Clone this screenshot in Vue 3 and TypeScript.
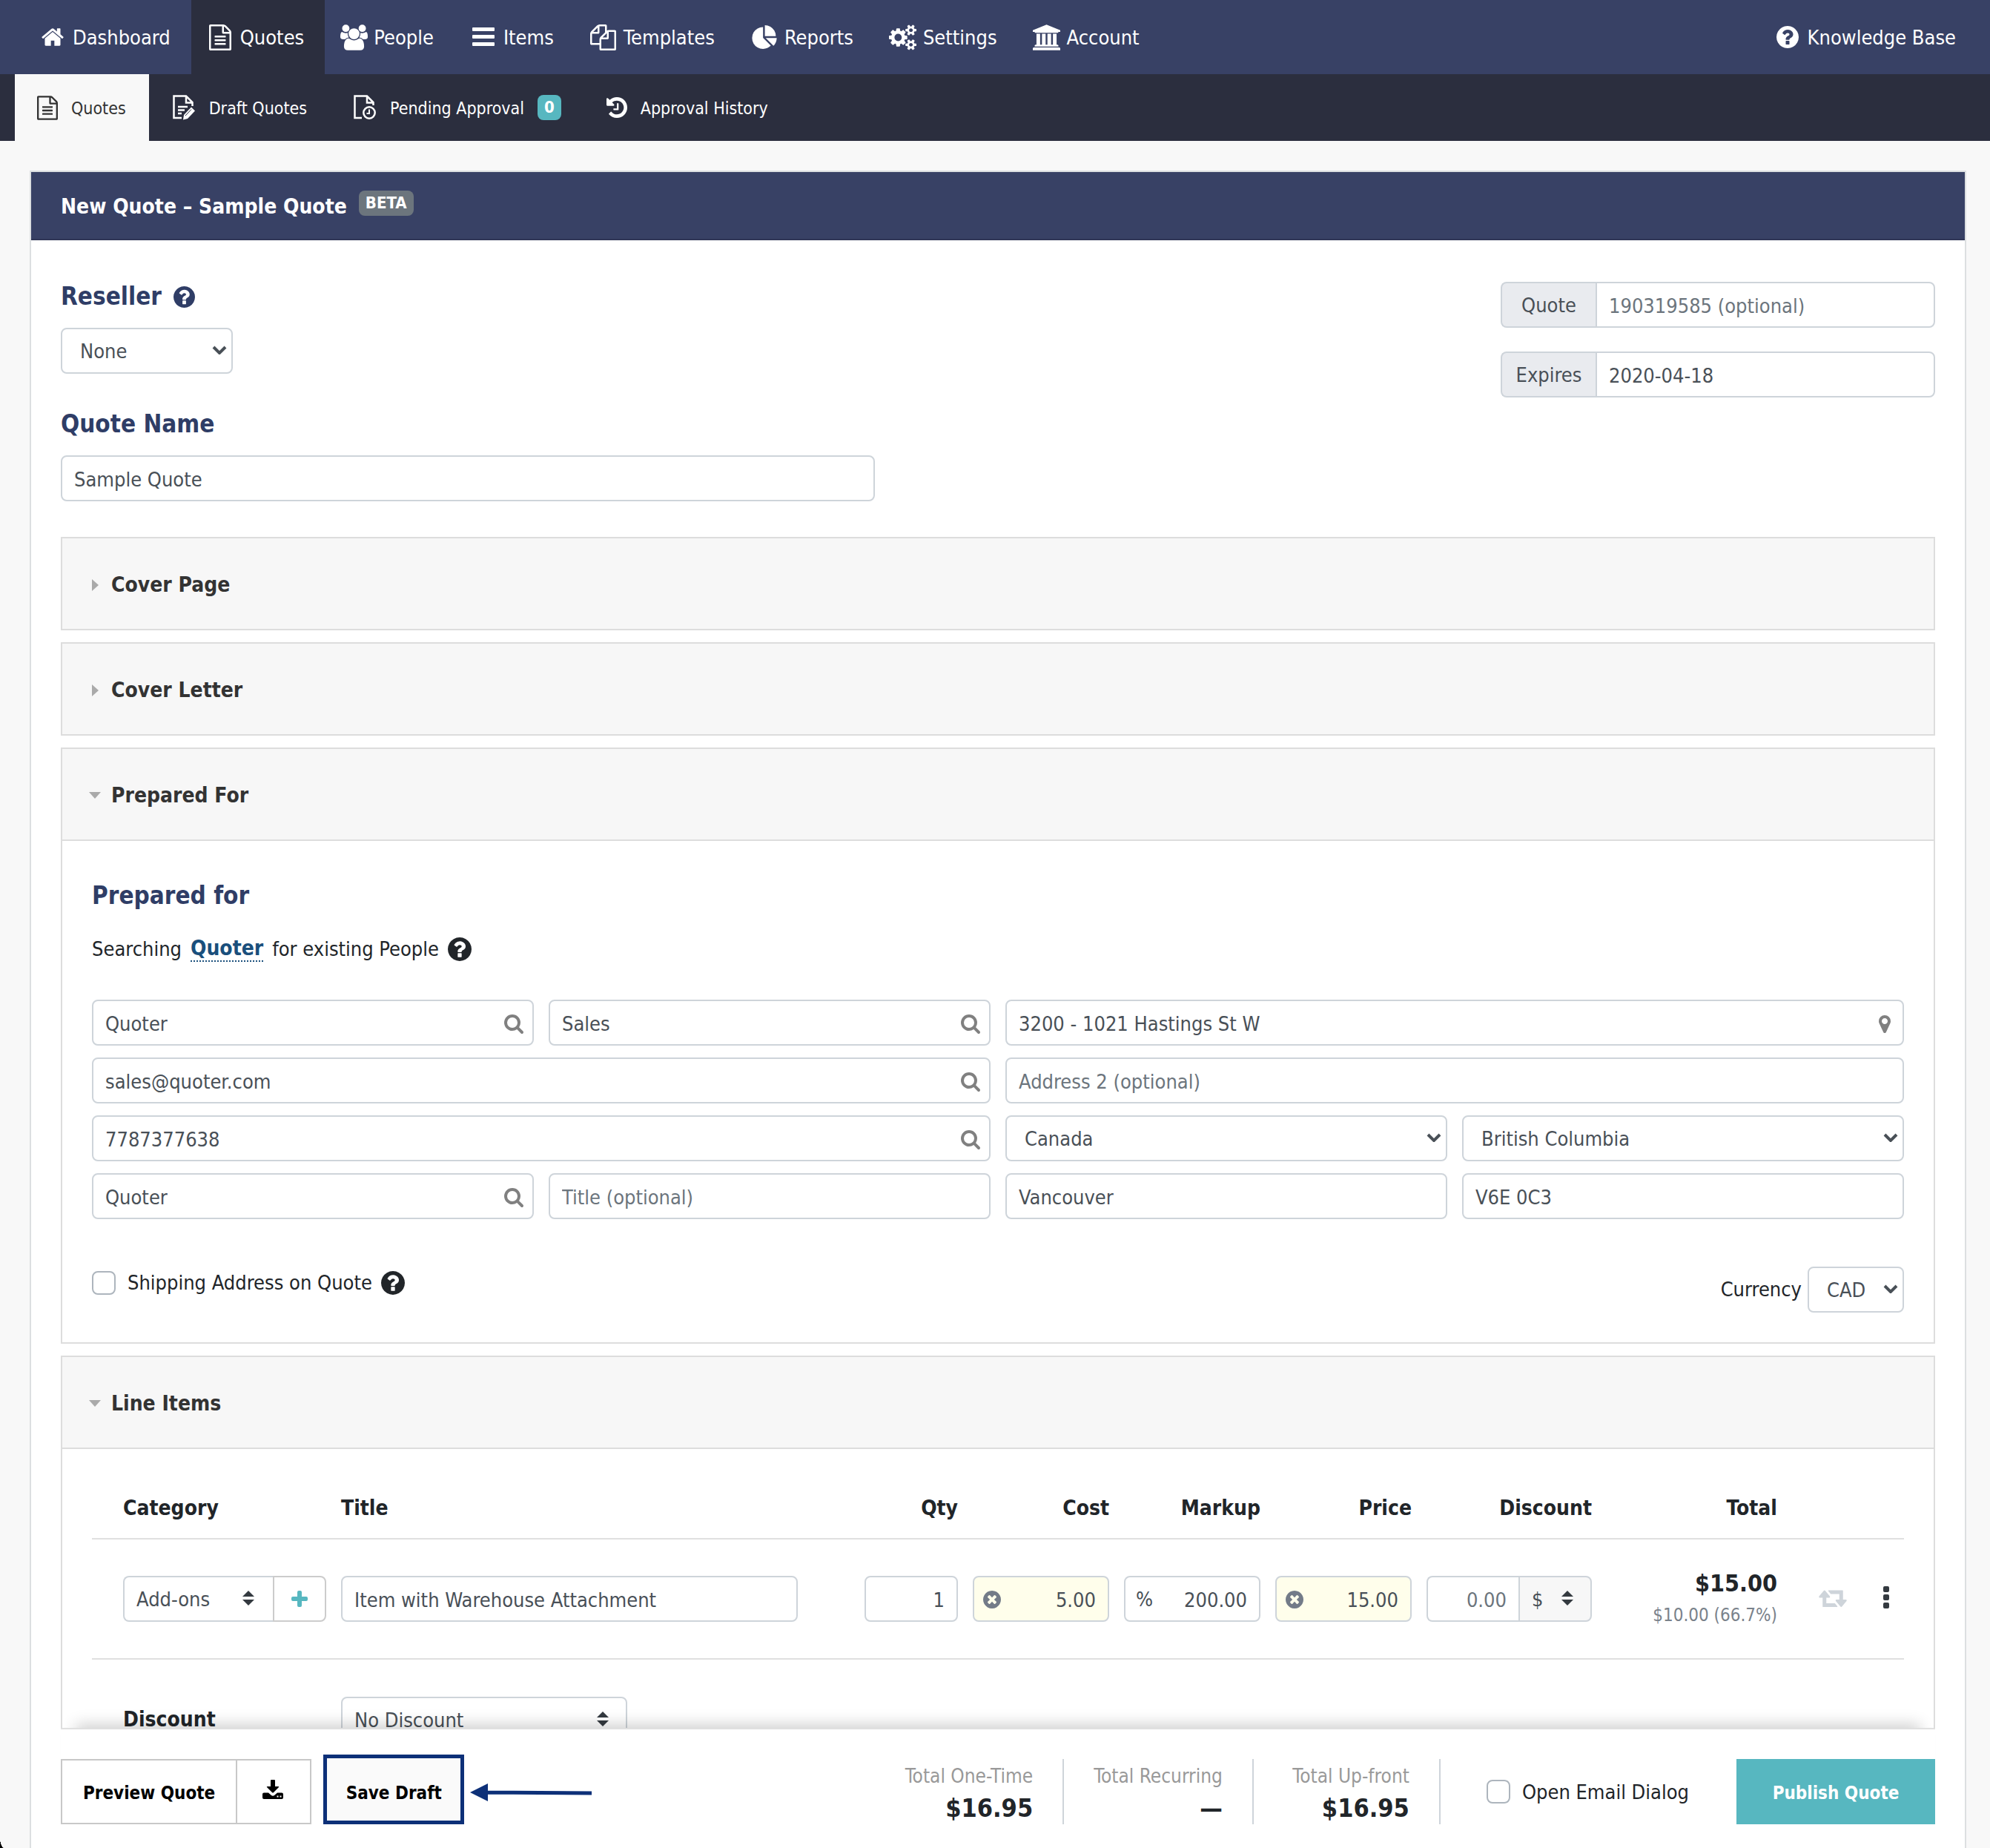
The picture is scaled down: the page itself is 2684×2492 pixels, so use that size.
<script setup lang="ts">
import { ref, h, type FunctionalComponent } from 'vue'

interface Glyph {
  box: string
  d: string
}

const disc =
  'm387-226q0 209-103 385.5t-279.5 279.5-385.5 103-385.5-103-279.5-279.5-103-385.5 103-385.5 279.5-279.5 385.5-103 385.5 103 279.5 279.5 103 385.5z'

const glyphs: Record<string, Glyph> = {
  home: {
    box: '80 128 1632 1536',
    d: 'M1472 992v480q0 26-19 45t-45 19h-384v-384h-256v384h-384q-26 0-45-19t-19-45v-480q0-1 .5-3t.5-3l575-474 575 474q1 2 1 6zm223-69l-62 74q-8 9-21 11h-3q-13 0-21-7l-692-577-692 577q-12 8-24 7-13-2-21-11l-62-74q-8-10-7-23.5t11-21.5l719-599q32-26 76-26t76 26l244 204v-195q0-14 9-23t23-9h192q14 0 23 9t9 23v408l219 182q10 8 11 21.5t-7 23.5z',
  },
  file: {
    box: '128 0 1536 1792',
    d: 'M1596 380q28 28 48 76t20 88v1152q0 40-28 68t-68 28h-1344q-40 0-68-28t-28-68v-1600q0-40 28-68t68-28h896q40 0 88 20t76 48zm-444-244v376h376q-10-29-22-41l-313-313q-12-12-41-22zm384 1528v-1024h-416q-40 0-68-28t-28-68v-416h-768v1536h1280zm-1024-864q0-14 9-23t23-9h704q14 0 23 9t9 23v64q0 14-9 23t-23 9h-704q-14 0-23-9t-9-23v-64zm736 224q14 0 23 9t9 23v64q0 14-9 23t-23 9h-704q-14 0-23-9t-9-23v-64q0-14 9-23t23-9h704zm0 256q14 0 23 9t9 23v64q0 14-9 23t-23 9h-704q-14 0-23-9t-9-23v-64q0-14 9-23t23-9h704z',
  },
  users: {
    box: '0 0 1920 1792',
    d: 'M593 896q-162 5-265 128h-134q-82 0-138-40.5t-56-118.5q0-353 124-353 6 0 43.5 21t97.5 42.5 119 21.5q67 0 133-23-5 37-5 66 0 139 81 256zm1071 637q0 120-73 189.5t-194 69.5h-874q-121 0-194-69.5t-73-189.5q0-53 3.5-103.5t14-109 26.5-108.5 43-97.5 62-81 85.5-53.5 111.5-20q10 0 43 21.5t73 48 107 48 135 21.5 135-21.5 107-48 73-48 43-21.5q61 0 111.5 20t85.5 53.5 62 81 43 97.5 26.5 108.5 14 109 3.5 103.5zm-1024-1277q0 106-75 181t-181 75-181-75-75-181 75-181 181-75 181 75 75 181zm704 384q0 159-112.5 271.5t-271.5 112.5-271.5-112.5-112.5-271.5 112.5-271.5 271.5-112.5 271.5 112.5 112.5 271.5zm576 225q0 78-56 118.5t-138 40.5h-134q-103-123-265-128 81-117 81-256 0-29-5-66 66 23 133 23 59 0 119-21.5t97.5-42.5 43.5-21q124 0 124 353zm-128-609q0 106-75 181t-181 75-181-75-75-181 75-181 181-75 181 75 75 181z',
  },
  bars: {
    box: '0 0 30 26',
    d: 'M1 0h28q1 0 1 1v3q0 1-1 1h-28q-1 0-1-1v-3q0-1 1-1zM1 10h28q1 0 1 1v3q0 1-1 1h-28q-1 0-1-1v-3q0-1 1-1zM1 20h28q1 0 1 1v3q0 1-1 1h-28q-1 0-1-1v-3q0-1 1-1z',
  },
  files: {
    box: '0 0 1792 1792',
    d: 'M1696 384q40 0 68 28t28 68v1216q0 40-28 68t-68 28h-960q-40 0-68-28t-28-68v-288h-544q-40 0-68-28t-28-68v-672q0-40 20-88t48-76l408-408q28-28 76-48t88-20h416q40 0 68 28t28 68v328q68-40 128-40h416zm-544 213l-299 299h299v-299zm-640-384l-299 299h299v-299zm196 647l316-316v-416h-384v416q0 40-28 68t-68 28h-416v640h512v-256q0-40 20-88t48-76zm956 804v-1152h-384v416q0 40-28 68t-68 28h-416v640h896z',
  },
  pie: {
    box: '0 0 1728 1664',
    d: 'M768 890l546 546q-106 108-247.5 168t-298.5 60q-209 0-385.5-103t-279.5-279.5-103-385.5 103-385.5 279.5-279.5 385.5-103v762zm187 6h773q0 157-60 298.5t-168 247.5zm709-128h-768v-768q209 0 385.5 103t279.5 279.5 103 385.5z',
  },
  cogs: {
    box: '-64 0 1920 1792',
    d: 'M832 896q0-106-75-181t-181-75-181 75-75 181 75 181 181 75 181-75 75-181zm768 512q0-52-38-90t-90-38-90 38-38 90q0 53 37.5 90.5t90.5 37.5 90.5-37.5 37.5-90.5zm0-1024q0-52-38-90t-90-38-90 38-38 90q0 53 37.5 90.5t90.5 37.5 90.5-37.5 37.5-90.5zm-384 421v185q0 10-7 19.5t-16 10.5l-155 24q-11 35-32 76 34 48 90 115 7 11 7 20 0 12-7 19-23 30-82.5 89.5t-78.5 59.5q-11 0-21-7l-115-90q-37 19-77 31-11 108-23 155-7 24-30 24h-186q-11 0-20-7.5t-10-17.5l-23-153q-34-10-75-31l-118 89q-7 7-20 7-11 0-21-8-144-133-144-160 0-9 7-19 10-14 41-53t47-61q-23-44-35-82l-152-24q-10-1-17-9.5t-7-19.5v-185q0-10 7-19.5t16-10.5l155-24q11-35 32-76-34-48-90-115-7-11-7-20 0-12 7-20 22-30 82-89t79-59q11 0 21 7l115 90q34-18 77-32 11-108 23-154 7-24 30-24h186q11 0 20 7.5t10 17.5l23 153q34 10 75 31l118-89q8-7 20-7 11 0 21 8 144 133 144 160 0 8-7 19-12 16-42 54t-45 60q23 48 34 82l152 23q10 2 17 10.5t7 19.5zm640 533v140q0 16-149 31-12 27-30 52 51 113 51 138 0 4-4 7-122 71-124 71-8 0-46-47t-52-68q-20 2-30 2t-30-2q-14 21-52 68t-46 47q-2 0-124-71-4-3-4-7 0-25 51-138-18-25-30-52-149-15-149-31v-140q0-16 149-31 13-29 30-52-51-113-51-138 0-4 4-7 4-2 35-20t59-34 30-16q8 0 46 46.5t52 67.5q20-2 30-2t30 2q51-71 92-112l6-2q4 0 124 70 4 3 4 7 0 25-51 138 17 23 30 52 149 15 149 31zm0-1024v140q0 16-149 31-12 27-30 52 51 113 51 138 0 4-4 7-122 71-124 71-8 0-46-47t-52-68q-20 2-30 2t-30-2q-14 21-52 68t-46 47q-2 0-124-71-4-3-4-7 0-25 51-138-18-25-30-52-149-15-149-31v-140q0-16 149-31 13-29 30-52-51-113-51-138 0-4 4-7 4-2 35-20t59-34 30-16q8 0 46 46.5t52 67.5q20-2 30-2t30 2q51-71 92-112l6-2q4 0 124 70 4 3 4 7 0 25-51 138 17 23 30 52 149 15 149 31z',
  },
  bank: {
    box: '-128 0 1920 1792',
    d: 'M832 0l960 384v128h-128q0 26-20.5 45t-48.5 19h-1526q-28 0-48.5-19t-20.5-45h-128v-128zm-704 640h256v768h128v-768h256v768h128v-768h256v768h128v-768h256v768h59q28 0 48.5 19t20.5 45v64h-1664v-64q0-26 20.5-45t48.5-19h59v-768zm1595 960q28 0 48.5 19t20.5 45v128h-1920v-128q0-26 20.5-45t48.5-19h1782z',
  },
  help: {
    box: '128 128 1536 1536',
    d: 'M1024 1376v-192q0-14-9-23t-23-9h-192q-14 0-23 9t-9 23v192q0 14 9 23t23 9h192q14 0 23-9t9-23zm256-672q0-88-55.5-163t-138.5-116-170-41q-243 0-371 213-15 24 8 42l132 100q7 6 19 6 16 0 25-12 53-68 86-92 34-24 86-24 48 0 85.5 26t37.5 59q0 38-20 61t-68 45q-63 28-115.5 86.5t-52.5 125.5v36q0 14 9 23t23 9h192q14 0 23-9t9-23q0-19 21.5-49.5t54.5-49.5q32-18 49-28.5t46-35 44.5-48 28-60.5 12.5-81zm384 192q0 209-103 385.5t-279.5 279.5-385.5 103-385.5-103-279.5-279.5-103-385.5 103-385.5 279.5-279.5 385.5-103 385.5 103 279.5 279.5 103 385.5z',
  },
  history: {
    box: '128 128 1536 1536',
    d: 'M1664 896q0 156-61 298t-164 245-245 164-298 61q-172 0-327-72.5t-264-204.5q-7-10-6.5-22.5t8.5-20.5l137-138q10-9 25-9 16 2 23 12 73 95 179 147t225 52q104 0 198.5-40.5t163.5-109.5 109.5-163.5 40.5-198.5-40.5-198.5-109.5-163.5-163.5-109.5-198.5-40.5q-98 0-188 35.5t-160 101.5l137 138q31 30 14 69-17 40-59 40h-448q-26 0-45-19t-19-45v-448q0-42 40-59 39-17 69 14l130 129q107-101 244.5-156.5t284.5-55.5q156 0 298 61t245 164 164 245 61 298zm-640-288v448q0 14-9 23t-23 9h-320q-14 0-23-9t-9-23v-64q0-14 9-23t23-9h224v-352q0-14 9-23t23-9h64q14 0 23 9t9 23z',
  },
  search: {
    box: '64 128 1664 1664',
    d: 'M1216 832q0-185-131.5-316.5t-316.5-131.5-316.5 131.5-131.5 316.5 131.5 316.5 316.5 131.5 316.5-131.5 131.5-316.5zm512 832q0 52-38 90t-90 38q-54 0-90-38l-343-342q-179 124-399 124-143 0-273.5-55.5t-225-150-150-225-55.5-273.5 55.5-273.5 150-225 225-150 273.5-55.5 273.5 55.5 225 150 150 225 55.5 273.5q0 220-124 399l343 343q37 37 37 90z',
  },
  marker: {
    box: '384 128 1024 1536',
    d: 'M1152 640q0-106-75-181t-181-75-181 75-75 181 75 181 181 75 181-75 75-181zm256 0q0 109-33 179l-364 774q-16 33-47.5 52t-67.5 19-67.5-19-46.5-52l-365-774q-33-70-33-179 0-212 150-362t362-150 362 150 150 362z',
  },
  clear: {
    box: '128 128 1536 1536',
    d:
      'M1277 1122q0-26-19-45l-181-181 181-181q19-19 19-45 0-27-19-46l-90-90q-19-19-46-19-26 0-45 19l-181 181-181-181q-19-19-45-19-27 0-46 19l-90 90q-19 19-19 46 0 26 19 45l181 181-181 181q-19 19-19 45 0 27 19 46l90 90q19 19 46 19 26 0 45-19l181-181 181 181q19 19 45 19 27 0 46-19l90-90q19-19 19-46z' +
      disc,
  },
  repeat: {
    box: '0 256 1920 1280',
    d: 'M1280 1504q0 13-9.5 22.5t-22.5 9.5h-960q-8 0-13.5-2t-9-7-5.5-8-3-11.5-1-11.5v-600h-192q-26 0-45-19t-19-45q0-24 15-41l320-384q19-22 49-22t49 22l320 384q15 17 15 41 0 26-19 45t-45 19h-192v384h576q16 0 25 11l160 192q7 10 7 21zm640-416q0 24-15 41l-320 384q-20 23-49 23t-49-23l-320-384q-15-17-15-41 0-26 19-45t45-19h192v-384h-576q-16 0-25-12l-160-192q-7-9-7-20 0-13 9.5-22.5t22.5-9.5h960q8 0 13.5 2t9 7 5.5 8 3 11.5 1 11.5v600h192q26 0 45 19t19 45z',
  },
  dots: {
    box: '0 0 8 30',
    d: 'M2 0h4q2 0 2 2v4q0 2-2 2h-4q-2 0-2-2v-4q0-2 2-2zM2 11h4q2 0 2 2v4q0 2-2 2h-4q-2 0-2-2v-4q0-2 2-2zM2 22h4q2 0 2 2v4q0 2-2 2h-4q-2 0-2-2v-4q0-2 2-2z',
  },
  plus: {
    box: '0 0 22 22',
    d: 'M10 0h2q2 0 2 2v6h6q2 0 2 2v2q0 2-2 2h-6v6q0 2-2 2h-2q-2 0-2-2v-6h-6q-2 0-2-2v-2q0-2 2-2h6v-6q0-2 2-2z',
  },
  download: {
    box: '0 0 28 26',
    d: 'M11 1q0-1 1-1h4q1 0 1 1v8h4q2 0 1 1l-7 7q-1 1-2 0l-7-7q-1-1 1-1h4zM2 17.5h6l4 3.500q2 1.500 4 0l4-3.500h6q2 0 2 2v4.500q0 2-2 2h-24q-2 0-2-2v-4.500q0-2 2-2zM19.500 21.500v2h2v-2zM23.500 21.500v2h2v-2z',
  },
  sort: { box: '0 0 16 20', d: 'M8 0l8 8h-16zM0 12h16l-8 8z' },
  right: { box: '0 0 9 16', d: 'M0 0l9 8-9 8z' },
  down: { box: '0 0 16 9', d: 'M0 0h16l-8 9z' },
}

const Icon: FunctionalComponent<{ name: string }> = (props) =>
  h(
    'svg',
    { viewBox: glyphs[props.name].box, fill: 'currentColor', 'fill-rule': props.name === 'download' ? 'evenodd' : 'nonzero', 'aria-hidden': 'true' },
    [h('path', { d: glyphs[props.name].d })],
  )
Icon.props = ['name']

const navItems = [
  { label: 'Dashboard', icon: 'home' },
  { label: 'Quotes', icon: 'file' },
  { label: 'People', icon: 'users' },
  { label: 'Items', icon: 'bars' },
  { label: 'Templates', icon: 'files' },
  { label: 'Reports', icon: 'pie' },
  { label: 'Settings', icon: 'cogs' },
  { label: 'Account', icon: 'bank' },
]

const contact = ref([
  { id: 'first', label: 'First name', value: 'Quoter', icon: 'search' },
  { id: 'last', label: 'Last name', value: 'Sales', icon: 'search' },
  { id: 'address', label: 'Address', value: '3200 - 1021 Hastings St W', icon: 'marker', wide: true },
  { id: 'email', label: 'Email', value: 'sales@quoter.com', icon: 'search', wide: true },
  { id: 'address2', label: 'Address 2', value: '', hint: 'Address 2 (optional)', wide: true },
  { id: 'phone', label: 'Phone', value: '7787377638', icon: 'search', wide: true },
  { id: 'country', label: 'Country', value: 'Canada', select: true },
  { id: 'region', label: 'Region', value: 'British Columbia', select: true },
  { id: 'company', label: 'Company', value: 'Quoter', icon: 'search' },
  { id: 'title', label: 'Title', value: '', hint: 'Title (optional)' },
  { id: 'city', label: 'City', value: 'Vancouver' },
  { id: 'postal', label: 'Postal code', value: 'V6E 0C3' },
] as { id: string; label: string; value: string; icon?: string; hint?: string; wide?: boolean; select?: boolean }[])

const quoteName = ref('Sample Quote')
const quoteNumber = ref('')
const expires = ref('2020-04-18')
const item = ref({ title: 'Item with Warehouse Attachment', qty: '1', cost: '5.00', markup: '200.00', price: '15.00' })
const shipping = ref(false)
const openEmail = ref(false)

const totals = [
  { label: 'Total One-Time', value: '$16.95' },
  { label: 'Total Recurring', value: '—' },
  { label: 'Total Up-front', value: '$16.95' },
]
</script>

<template>
  <div class="app">
    <nav class="nav" aria-label="Main">
      <a v-for="n in navItems" :key="n.label" href="#" :class="['nav-item', { active: n.label === 'Quotes' }]">
        <span class="slot"><Icon :name="n.icon" :class="'i-' + n.icon" /></span>
        <span class="label">{{ n.label }}</span>
      </a>
      <a href="#" class="nav-item kb"><Icon name="help" class="i-help" /><span class="label">Knowledge Base</span></a>
    </nav>

    <nav class="subnav" aria-label="Quotes">
      <a href="#" class="sub active"><Icon name="file" class="i-sub" /><span class="label">Quotes</span></a>
      <a href="#" class="sub">
        <svg class="i-draft" viewBox="0 0 30 34" fill="none" stroke="currentColor" stroke-width="2.500" aria-hidden="true">
          <path d="M12 31H1.500V1.500H18L26.500 10V15M18 2V10.500H26M7 16H20M7 20.500H16M7 25H12" />
          <path d="M25 16.500l5 5-10 10.500-6 1.500 1-6.500z" fill="currentColor" stroke="none" />
          <path d="M17 28l8-8.500" stroke="#2b2e3e" stroke-width="1" />
        </svg>
        <span class="label">Draft Quotes</span>
      </a>
      <a href="#" class="sub">
        <svg class="i-draft" viewBox="0 0 30 34" fill="none" stroke="currentColor" stroke-width="2.500" aria-hidden="true">
          <path d="M11 31H1.500V1.500H18L26.500 10V14M18 2V10.500H26" />
          <circle cx="21" cy="24" r="7.700" />
          <path d="M21 19.500V25H17.500" stroke-width="2" />
        </svg>
        <span class="label">Pending Approval</span>
        <span class="count">0</span>
      </a>
      <a href="#" class="sub"><Icon name="history" class="i-history" /><span class="label">Approval History</span></a>
    </nav>

    <main class="card">
      <header class="card-head">
        <h1>New Quote – Sample Quote</h1>
        <span class="beta">BETA</span>
      </header>

      <div class="body">
        <div class="intro">
          <div class="intro-left">
            <h2><label for="reseller">Reseller</label> <Icon name="help" class="i-reseller" /></h2>
            <div class="pick pick-reseller">
              <select id="reseller" class="field"><option>None</option></select>
              <svg class="chev" viewBox="0 0 20 12" aria-hidden="true"><path d="M2 2l8 8 8-8" /></svg>
            </div>
            <h2><label for="quote-name">Quote Name</label></h2>
            <input id="quote-name" v-model="quoteName" class="field" type="text" />
          </div>
          <div class="intro-right">
            <div class="group">
              <label for="quote-no">Quote</label>
              <input id="quote-no" v-model="quoteNumber" class="field" type="text" placeholder="190319585 (optional)" />
            </div>
            <div class="group">
              <label for="expires">Expires</label>
              <input id="expires" v-model="expires" class="field" type="text" />
            </div>
          </div>
        </div>

        <section class="fold">
          <button type="button" class="fold-head"><Icon name="right" class="i-right" />Cover Page</button>
        </section>
        <section class="fold">
          <button type="button" class="fold-head"><Icon name="right" class="i-right" />Cover Letter</button>
        </section>

        <section class="fold open">
          <button type="button" class="fold-head"><Icon name="down" class="i-down" />Prepared For</button>
          <div class="prepared">
            <h2>Prepared for</h2>
            <p class="searching">
              Searching <a href="#">Quoter</a> for existing People <Icon name="help" class="i-q" />
            </p>
            <div class="grid">
              <div v-for="f in contact" :key="f.id" :class="['cell', { wide: f.wide }]">
                <template v-if="f.select">
                  <select :id="f.id" class="field" :aria-label="f.label"><option>{{ f.value }}</option></select>
                  <svg class="chev" viewBox="0 0 20 12" aria-hidden="true"><path d="M2 2l8 8 8-8" /></svg>
                </template>
                <template v-else>
                  <input :id="f.id" v-model="f.value" class="field" type="text" :placeholder="f.hint" :aria-label="f.label" />
                  <Icon v-if="f.icon" :name="f.icon" :class="['inside', 'in-' + f.icon]" />
                </template>
              </div>
            </div>
            <div class="extras">
              <label class="check">
                <input v-model="shipping" type="checkbox" />
                <span>Shipping Address on Quote</span>
                <Icon name="help" class="i-q" />
              </label>
              <div class="currency">
                <label for="currency">Currency</label>
                <div class="pick pick-currency">
                  <select id="currency" class="field"><option>CAD</option></select>
                  <svg class="chev" viewBox="0 0 20 12" aria-hidden="true"><path d="M2 2l8 8 8-8" /></svg>
                </div>
              </div>
            </div>
          </div>
        </section>

        <section class="fold open">
          <button type="button" class="fold-head"><Icon name="down" class="i-down" />Line Items</button>
          <div class="items">
            <table>
              <colgroup>
                <col class="c-cat" /><col /><col class="c-qty" /><col class="c-num" /><col class="c-num" />
                <col class="c-num" /><col class="c-disc" /><col class="c-total" /><col class="c-act" />
              </colgroup>
              <thead>
                <tr>
                  <th>Category</th>
                  <th>Title</th>
                  <th class="num">Qty</th>
                  <th class="num">Cost</th>
                  <th class="num">Markup</th>
                  <th class="num">Price</th>
                  <th class="num">Discount</th>
                  <th class="num">Total</th>
                  <th></th>
                </tr>
              </thead>
              <tbody>
                <tr class="item">
                  <td>
                    <div class="joined">
                      <div class="pick grow">
                        <select class="field flat" aria-label="Category"><option>Add-ons</option></select>
                        <Icon name="sort" class="sort" />
                      </div>
                      <button type="button" class="add" aria-label="Add category"><Icon name="plus" /></button>
                    </div>
                  </td>
                  <td><input v-model="item.title" class="field title" type="text" aria-label="Title" /></td>
                  <td><input v-model="item.qty" class="field num" type="text" aria-label="Quantity" /></td>
                  <td>
                    <div class="pick">
                      <input v-model="item.cost" class="field num warm" type="text" aria-label="Cost" />
                      <Icon name="clear" class="clear" />
                    </div>
                  </td>
                  <td>
                    <div class="pick">
                      <input v-model="item.markup" class="field num" type="text" aria-label="Markup" />
                      <span class="unit">%</span>
                    </div>
                  </td>
                  <td>
                    <div class="pick">
                      <input v-model="item.price" class="field num warm" type="text" aria-label="Price" />
                      <Icon name="clear" class="clear" />
                    </div>
                  </td>
                  <td>
                    <div class="joined">
                      <input class="field num disc" type="text" placeholder="0.00" aria-label="Discount" />
                      <div class="pick grow">
                        <select class="field unit-pick" aria-label="Discount unit"><option>$</option></select>
                        <Icon name="sort" class="sort" />
                      </div>
                    </div>
                  </td>
                  <td class="num"><div class="sum">$15.00</div><div class="margin">$10.00 (66.7%)</div></td>
                  <td>
                    <div class="acts">
                      <button type="button" aria-label="Make recurring"><Icon name="repeat" class="i-repeat" /></button>
                      <button type="button" aria-label="More"><Icon name="dots" class="i-dots" /></button>
                    </div>
                  </td>
                </tr>
                <tr class="discount">
                  <th scope="row"><label for="discount">Discount</label></th>
                  <td colspan="8">
                    <div class="pick pick-discount">
                      <select id="discount" class="field flat"><option>No Discount</option></select>
                      <Icon name="sort" class="sort" />
                    </div>
                  </td>
                </tr>
              </tbody>
            </table>
          </div>
        </section>
      </div>

      <footer class="bar">
        <div class="buttons">
          <button type="button" class="btn">Preview Quote</button>
          <button type="button" class="btn dl" aria-label="Download"><Icon name="download" class="i-dl" /></button>
          <button type="button" class="btn save">Save Draft</button>
          <svg class="arrow" viewBox="0 0 164 24" aria-hidden="true">
            <path d="M0 12L24 0V24zM22 9.500L164 10.500V15.500L22 14.500z" />
          </svg>
        </div>
        <dl class="totals">
          <div v-for="t in totals" :key="t.label"><dt>{{ t.label }}</dt><dd>{{ t.value }}</dd></div>
        </dl>
        <label class="check email"><input v-model="openEmail" type="checkbox" /><span class="label">Open Email Dialog</span></label>
        <button type="button" class="publish">Publish Quote</button>
      </footer>
    </main>
    <span class="corner"></span>
  </div>
</template>

<style>
body {
  background: #f8f8f8;
}
</style>

<style scoped>
.app,
.app * {
  box-sizing: border-box;
}
.app {
  position: relative;
  height: 100vh;
  display: flex;
  flex-direction: column;
  overflow: hidden;
  font-family: 'DejaVu Sans Condensed', Tahoma, 'DejaVu Sans', sans-serif;
  font-size: 27px;
  line-height: 40px;
  color: #212529;
}
svg {
  display: block;
  flex: none;
}
button,
input,
select {
  font: inherit;
  color: inherit;
  margin: 0;
}
button {
  cursor: pointer;
}
h1,
h2,
p,
dl,
dd {
  margin: 0;
}
.label {
  padding-top: 2px;
}

/* main navigation */
.nav {
  flex: none;
  display: flex;
  height: 100px;
  padding: 0 18px 0 32px;
  background: #384165;
}
.nav-item {
  display: flex;
  align-items: center;
  gap: 8px;
  padding: 0 28px 0 20px;
  color: #fff;
  text-decoration: none;
  white-space: nowrap;
}
.nav-item.active {
  background: #2b2e3e;
}
.slot {
  display: flex;
  justify-content: center;
  width: 38px;
}
.kb {
  margin-left: auto;
  gap: 12px;
}
.i-home { width: 32px; height: 28px; }
.i-file { width: 30px; height: 35px; }
.i-users { width: 37px; height: 35px; }
.i-bars { width: 30px; height: 26px; }
.i-files { width: 35px; height: 35px; }
.i-pie { width: 34px; height: 32px; }
.i-cogs { width: 37px; height: 35px; }
.i-bank { width: 37px; height: 35px; }
.i-help { width: 30px; height: 30px; }

.subnav {
  flex: none;
  display: flex;
  height: 90px;
  padding-left: 20px;
  background: #2b2e3e;
  font-size: 23px;
}
.sub {
  display: flex;
  align-items: center;
  gap: 18px;
  padding: 0 31px 0 30px;
  color: #fff;
  text-decoration: none;
  white-space: nowrap;
}
.sub.active {
  background: #f8f8f8;
  color: #333;
}
.i-sub { width: 28px; height: 33px; }
.i-draft { width: 30px; height: 34px; margin: 0 1px 0 2px; }
.i-history { width: 28px; height: 28px; }
.count {
  padding: 0 9px;
  border-radius: 8px;
  background: #57b7c0;
  font-size: 22px;
  font-weight: bold;
  line-height: 34px;
}

/* card */
.card {
  flex: 1;
  min-height: 0;
  display: flex;
  flex-direction: column;
  margin: 40px 32px 0 40px;
  border: 2px solid #dcdfe1;
  border-bottom: 0;
  background: #fff;
}
.card-head {
  flex: none;
  display: flex;
  align-items: center;
  gap: 16px;
  height: 92px;
  padding: 0 40px;
  border-bottom: 2px solid #303657;
  background: #384165;
  color: #fff;
}
h1 {
  padding-top: 3px;
  font-size: 28px;
}
.beta {
  margin-bottom: 6px;
  padding: 0 9px;
  border-radius: 8px;
  background: #6c757d;
  font-size: 22px;
  font-weight: bold;
  line-height: 34px;
}
.body {
  flex: 1;
  min-height: 0;
  padding: 56px 40px 0;
  overflow: hidden;
}
h2 {
  display: flex;
  align-items: center;
  gap: 16px;
  height: 40px;
  font-size: 33px;
  color: #2f3d66;
}
.i-reseller { width: 29px; height: 29px; }

.field {
  display: block;
  width: 100%;
  height: 62px;
  padding: 2px 16px 0;
  border: 2px solid #ced4da;
  border-radius: 8px;
  background: #fff;
  color: #495057;
  appearance: none;
  outline: 0;
}
.field::placeholder {
  color: #6c757d;
  opacity: 1;
}
select.field {
  padding: 2px 24px 0;
}
select.flat {
  padding: 2px 16px 0;
}
.pick,
.cell {
  position: relative;
}
.chev {
  position: absolute;
  right: 8px;
  top: 24px;
  width: 20px;
  height: 12px;
  fill: none;
  stroke: #495057;
  stroke-width: 4;
  pointer-events: none;
}

.intro {
  display: flex;
  justify-content: space-between;
  align-items: flex-start;
  margin-bottom: 48px;
}
.intro-left {
  width: 1098px;
}
.intro-left h2 {
  margin: 0 0 22px;
}
.pick-reseller {
  width: 232px;
  margin-bottom: 48px;
}
.intro-right {
  width: 586px;
}
.group {
  display: flex;
  margin-bottom: 32px;
}
.group label {
  flex: none;
  display: flex;
  align-items: center;
  justify-content: center;
  width: 128px;
  padding-top: 2px;
  border: 2px solid #ced4da;
  border-right: 0;
  border-radius: 8px 0 0 8px;
  background: #e9ebef;
  color: #495057;
}
.group .field {
  border-radius: 0 8px 8px 0;
}

/* folding sections */
.fold {
  margin-bottom: 16px;
  border: 2px solid #ddd;
}
.fold-head {
  display: flex;
  align-items: center;
  width: 100%;
  height: 122px;
  padding: 3px 36px 0;
  border: 0;
  background: #f7f7f7;
  color: #333;
  font-size: 28px;
  font-weight: bold;
}
.fold.open .fold-head {
  height: 124px;
  border-bottom: 2px solid #ddd;
}
.i-right,
.i-down {
  color: #aaa;
}
.i-right { width: 9px; height: 16px; margin: 0 17px 0 4px; }
.i-down { width: 16px; height: 9px; margin-right: 14px; }

.prepared {
  padding: 54px 40px 40px;
}
.searching {
  display: flex;
  align-items: center;
  gap: 12px;
  height: 40px;
  margin-top: 32px;
}
.searching a {
  border-bottom: 2px dotted #1a4f7c;
  color: #1a4f7c;
  font-size: 28px;
  font-weight: bold;
  line-height: 32px;
  text-decoration: none;
}
.i-q { width: 32px; height: 32px; }
.grid {
  display: grid;
  grid-template-columns: repeat(4, 1fr);
  gap: 16px 20px;
  margin-top: 48px;
}
.wide {
  grid-column: span 2;
}
.inside {
  position: absolute;
  top: 20px;
  color: #808080;
}
.in-search { right: 14px; width: 26px; height: 26px; }
.in-marker { right: 18px; width: 16px; height: 26px; }
.extras {
  display: flex;
  justify-content: space-between;
  align-items: flex-start;
  margin-top: 64px;
}
.check {
  display: flex;
  align-items: center;
  gap: 12px;
  height: 44px;
}
.check input {
  flex: none;
  width: 32px;
  height: 32px;
  margin-right: 4px;
  border: 2px solid #adb5bd;
  border-radius: 8px;
  background: #fff;
  appearance: none;
}
.currency {
  display: flex;
  align-items: center;
  gap: 8px;
}
.pick-currency {
  width: 130px;
}

/* line items */
.items {
  padding: 0 40px 40px;
}
table {
  width: 100%;
  border-collapse: separate;
  border-spacing: 0;
  table-layout: fixed;
}
.c-cat { width: 336px; }
.c-qty { width: 146px; }
.c-num { width: 204px; }
.c-disc { width: 243px; }
.c-total { width: 250px; }
.c-act { width: 151px; }
th,
td {
  padding: 0 20px 0 0;
  text-align: left;
  vertical-align: middle;
}
th {
  font-size: 28px;
}
th:first-child,
td:first-child {
  padding-left: 42px;
}
th.num,
td.num {
  text-align: right;
}
thead th {
  height: 122px;
  padding-top: 40px;
  border-bottom: 2px solid #e0e0e0;
}
.item td {
  height: 162px;
  border-bottom: 2px solid #e0e0e0;
}
.joined {
  display: flex;
}
.grow {
  flex: 1;
}
.joined > :first-child .field,
.joined > .field {
  border-right: 0;
  border-radius: 8px 0 0 8px;
}
.joined > :last-child .field {
  border-radius: 0 8px 8px 0;
}
.add {
  display: flex;
  align-items: center;
  justify-content: center;
  width: 72px;
  height: 62px;
  border: 2px solid #ccc;
  border-radius: 0 8px 8px 0;
  background: #fff;
  color: #57b7c0;
}
.add svg {
  width: 22px;
  height: 22px;
}
.sort {
  position: absolute;
  right: 25px;
  top: 20px;
  width: 16px;
  height: 20px;
  color: #343a40;
  pointer-events: none;
}
.title {
  max-width: 616px;
}
.field.num {
  text-align: right;
}
.warm {
  background: #fffeeb;
}
.clear {
  position: absolute;
  left: 14px;
  top: 20px;
  width: 24px;
  height: 24px;
  color: #737b88;
}
.unit {
  position: absolute;
  left: 16px;
  top: 12px;
  color: #495057;
}
.disc {
  width: 124px;
}
select.unit-pick {
  padding: 2px 16px 0;
  background: #f7f7f7;
}
.sum {
  font-size: 32px;
  font-weight: bold;
  line-height: 46px;
}
.margin {
  padding-bottom: 2px;
  color: #7a828b;
  font-size: 24px;
}
.acts {
  display: flex;
  align-items: center;
  justify-content: space-between;
  padding-left: 36px;
}
.acts button {
  padding: 0 0 4px;
  border: 0;
  background: none;
}
.i-repeat { width: 38px; height: 25px; color: #ced4da; }
.i-dots { width: 8px; height: 30px; color: #343a40; }
.discount th,
.discount td {
  padding-top: 50px;
}
.pick-discount {
  width: 386px;
}

/* action bar */
.bar {
  position: relative;
  flex: none;
  display: flex;
  align-items: flex-start;
  height: 162px;
  margin: 0 40px;
  padding-top: 40px;
  border-top: 2px solid #e0e0e0;
  background: #fff;
  box-shadow: 0 -24px 20px -20px rgba(0, 0, 0, 0.2);
}
.buttons {
  display: flex;
  align-items: flex-end;
}
.btn {
  height: 88px;
  padding: 3px 28px 0;
  border: 2px solid #c8c8c8;
  background: #fff;
  color: #000;
  font-size: 24px;
  font-weight: bold;
  white-space: nowrap;
}
.dl {
  width: 102px;
  margin-left: -2px;
  padding: 0 34px 6px;
}
.i-dl { width: 28px; height: 26px; }
.save {
  width: 190px;
  height: 94px;
  margin: -6px 8px 0 16px;
  padding: 9px 0 0;
  border: 5px solid #0d3078;
  background: #fafafa;
}
.arrow {
  width: 164px;
  height: 24px;
  align-self: center;
  margin-top: 2px;
  fill: #0d3078;
}
.totals {
  display: flex;
  margin-left: auto;
}
.totals div {
  min-width: 252px;
  height: 88px;
  padding: 3px 40px 0;
  border-right: 2px solid #ced4da;
  text-align: right;
}
dt {
  color: #999;
  font-size: 26px;
}
dd {
  font-size: 34px;
  font-weight: bold;
  line-height: 46px;
}
.email {
  height: 88px;
  margin: 0 64px 0 62px;
}
.publish {
  width: 268px;
  height: 88px;
  padding: 3px 0 0;
  border: 0;
  background: #57b7c0;
  color: #fff;
  font-size: 24px;
  font-weight: bold;
}

/* rounded window corner */
.corner {
  position: absolute;
  left: 0;
  bottom: 0;
  width: 6px;
  height: 14px;
  background: radial-gradient(ellipse at 100% 0, transparent 70%, #000 72%);
}
</style>
